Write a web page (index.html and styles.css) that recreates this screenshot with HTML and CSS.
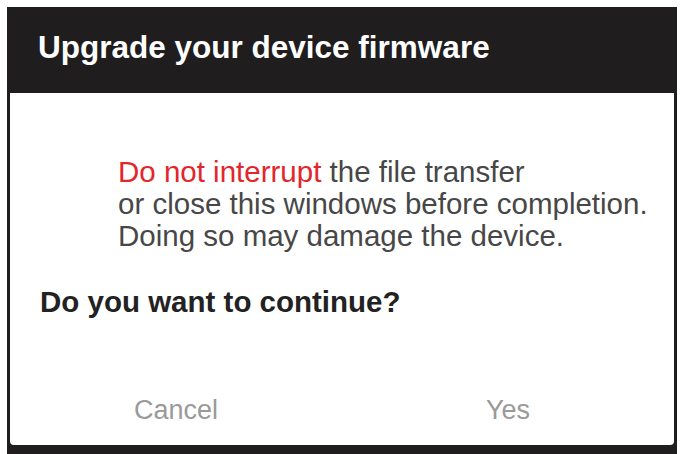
FILE: index.html
```html
<html>
<head>
  <meta charset="UTF-8">
  <title>Upgrade your device firmware</title>
  <link rel="stylesheet" href="styles.css">
</head>
<body>
<div class="dialog">
  <div class="header"><p>Upgrade your device firmware</p></div>
  <div class="main">
    <div class="message">
      <p><span class="warn">Do not interrupt</span> the file transfer</p>
      <p>or close this windows before completion.</p>
      <p>Doing so may damage the device.</p>
    </div>
    <p class="question">Do you want to continue?</p>
    <div class="buttons">
      <button class="btn">Cancel</button>
      <button class="btn">Yes</button>
    </div>
  </div>
</div>
</body>
</html>
```

FILE: styles.css
```css
body {
  margin: 0;
  background-color: #fff;
  font-family: "Liberation Sans", Arial, sans-serif;
  overflow: hidden;
}

p {
  margin: 0;
}

.dialog {
  margin: 7px 0 0 7px;
  width: 670px;
  height: 460px;
  background-color: #1f1d1e;
  padding: 0 3px;
  box-sizing: border-box;
}

.header {
  height: 86px;
  padding-left: 28px;
  display: flex;
  align-items: center;
}

.header p {
  color: #fff;
  font-size: 31.5px;
  font-weight: bold;
  margin-top: -6px;
}

.main {
  background-color: #fff;
  height: 352px;
  border-radius: 0 0 4px 4px;
  display: flex;
  flex-direction: column;
}

.message {
  padding: 63px 0 0 108px;
  color: #474747;
  font-size: 29.5px;
  line-height: 32px;
}

.warn {
  color: #e3262b;
}

.question {
  margin: 34px 0 0 30px;
  font-size: 29.5px;
  font-weight: bold;
  line-height: 32px;
  color: #222;
}

.buttons {
  display: flex;
  margin-top: auto;
  height: 72px;
}

.btn {
  flex: 1;
  border: none;
  background: none;
  font-family: "Liberation Sans", Arial, sans-serif;
  font-size: 27px;
  color: #9a9a9a;
  padding: 2px 0 0;
}
```
